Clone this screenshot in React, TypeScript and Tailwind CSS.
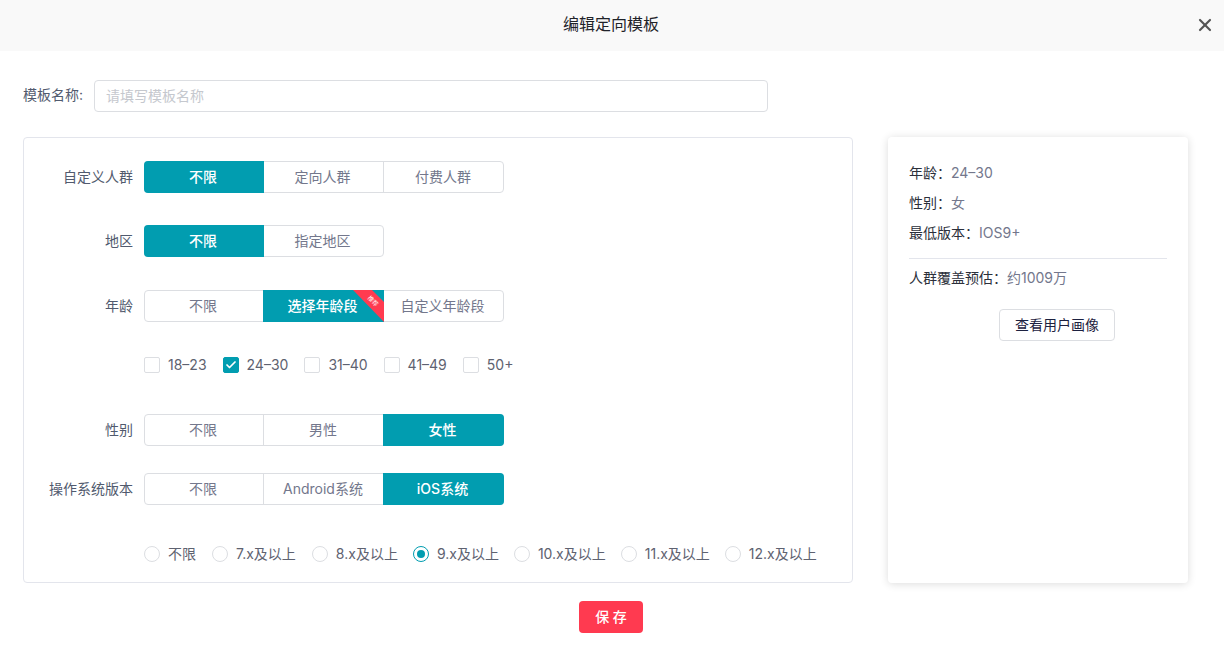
import { X, Check } from "lucide-react"

const font = "font-['Inter','Noto_Sans_CJK_SC',sans-serif]"

type SegItem = { text: string; ribbon?: boolean }

function Segments({ items, active }: { items: SegItem[]; active: number }) {
  return (
    <div className="flex h-8 rounded-[4px] border border-[#dcdee2] w-fit">
      {items.map((item, i) => {
        const on = i === active
        return (
          <div
            key={item.text}
            className={
              "relative flex items-center justify-center h-[32px] mt-[-1px] pr-[2px] text-sm " +
              (i === 0 ? "w-[120px] ml-[-1px] rounded-l-[4px] " : "w-[121px] ml-[-1px] ") +
              (i > 0 && !on && i - 1 !== active ? "border-l border-[#dcdee2] " : "") +
              (on ? "bg-[#019db0] text-white font-medium " : "text-[#73778c] ") +
              (i === items.length - 1 ? "mr-[-1px] rounded-r-[4px] " : "")
            }
          >
            {item.text}
            {item.ribbon && (
              <>
                <svg className="absolute right-0 top-0" width="32" height="32" viewBox="0 0 32 32">
                  <polygon points="1,0 20,0 32,12 32,32" fill="#ff3b50" />
                </svg>
                <span className="absolute right-[5px] top-[7px] rotate-45 text-[6px] leading-[8px] font-normal text-white">推荐</span>
              </>
            )}
          </div>
        )
      })}
    </div>
  )
}

function FormRow({ label, className, children }: { label: string; className?: string; children: React.ReactNode }) {
  return (
    <div className={"flex items-center h-8 " + (className ?? "")}>
      <div className="w-[109px] text-right text-sm text-[#515a6e] mr-[11px]">{label}</div>
      {children}
    </div>
  )
}

function CheckItem({ label, checked }: { label: string; checked?: boolean }) {
  return (
    <div className="flex items-center gap-2 mr-[16px]">
      <span
        className={
          "flex items-center justify-center w-4 h-4 rounded-[2px] border " +
          (checked ? "bg-[#019db0] border-[#019db0]" : "bg-white border-[#dcdee2]")
        }
      >
        {checked && <Check className="w-3 h-3 text-white" strokeWidth={3.5} />}
      </span>
      <span className="text-sm text-[#5e6270]">{label}</span>
    </div>
  )
}

function RadioItem({ label, checked, tight }: { label: string; checked?: boolean; tight?: boolean }) {
  return (
    <div className={"flex items-center gap-2 " + (tight ? "mr-[15px]" : "mr-[16px]")}>
      <span
        className={
          "flex items-center justify-center w-4 h-4 rounded-full border " +
          (checked ? "border-[#019db0]" : "border-[#dcdee2]")
        }
      >
        {checked && <span className="w-2 h-2 rounded-full bg-[#019db0]" />}
      </span>
      <span className="text-sm text-[#5e6270]">{label}</span>
    </div>
  )
}

function Info({ label, value, className }: { label: string; value: string; className?: string }) {
  return (
    <div className={"text-sm leading-5 " + (className ?? "")}>
      <span className="text-[#2b2f3a]">{label}：</span>
      <span className="text-[#73778c]">{value}</span>
    </div>
  )
}

export default function App() {
  return (
    <div className={"w-[1224px] h-[648px] overflow-hidden bg-white " + font}>
      <div className="relative flex items-center justify-center h-[51px] pb-[3px] pr-[2px] bg-[#f9f9f9]">
        <span className="text-base text-[#1f2329]">编辑定向模板</span>
        <X className="absolute right-[9px] top-[15px] w-5 h-5 text-[#555]" strokeWidth={2.6} />
      </div>

      <div className="flex items-center h-8 mt-[29px] ml-[23px]">
        <span className="w-[71px] pb-[3px] text-sm text-[#515a6e]">模板名称:</span>
        <input
          className="w-[674px] h-8 pl-[11px] pr-3 pb-[2px] rounded-[4px] border border-[#dcdee2] text-sm outline-none placeholder:text-[#c5c8ce]"
          placeholder="请填写模板名称"
        />
      </div>

      <div className="flex mt-[25px] ml-[23px]">
        <div className="w-[830px] h-[446px] rounded-[4px] border border-[#e3e5ec] pt-[23px]">
          <FormRow label="自定义人群">
            <Segments items={[{ text: "不限" }, { text: "定向人群" }, { text: "付费人群" }]} active={0} />
          </FormRow>
          <FormRow label="地区" className="mt-8">
            <Segments items={[{ text: "不限" }, { text: "指定地区" }]} active={0} />
          </FormRow>
          <FormRow label="年龄" className="mt-[33px]">
            <Segments
              items={[{ text: "不限" }, { text: "选择年龄段", ribbon: true }, { text: "自定义年龄段" }]}
              active={1}
            />
          </FormRow>
          <div className="flex items-center h-5 mt-[33px] ml-[120px]">
            <CheckItem label="18–23" />
            <CheckItem label="24–30" checked />
            <CheckItem label="31–40" />
            <CheckItem label="41–49" />
            <CheckItem label="50+" />
          </div>
          <FormRow label="性别" className="mt-[39px]">
            <Segments items={[{ text: "不限" }, { text: "男性" }, { text: "女性" }]} active={2} />
          </FormRow>
          <FormRow label="操作系统版本" className="mt-[27px]">
            <Segments items={[{ text: "不限" }, { text: "Android系统" }, { text: "iOS系统" }]} active={2} />
          </FormRow>
          <div className="flex items-center h-5 mt-[39px] ml-[120px]">
            <RadioItem label="不限" />
            <RadioItem label="7.x及以上" />
            <RadioItem label="8.x及以上" tight />
            <RadioItem label="9.x及以上" checked tight />
            <RadioItem label="10.x及以上" tight />
            <RadioItem label="11.x及以上" tight />
            <RadioItem label="12.x及以上" />
          </div>
        </div>

        <div className="w-[300px] h-[446px] ml-[35px] rounded-[4px] bg-white shadow-[0_1px_8px_rgba(0,0,0,0.14)] pt-[26px] px-[21px]">
          <Info label="年龄" value="24–30" />
          <Info label="性别" value="女" className="mt-[10px]" />
          <Info label="最低版本" value="IOS9+" className="mt-[10px]" />
          <div className="h-px bg-[#e3e5ec] mt-[15px]" />
          <Info label="人群覆盖预估" value="约1009万" className="mt-[9px]" />
          <div className="flex mt-[21px] ml-[90px]">
            <button className="w-[116px] h-8 rounded-[4px] border border-[#dcdee2] text-sm text-[#1c2140]">查看用户画像</button>
          </div>
        </div>
      </div>

      <div className="flex justify-center mt-[18px] pr-[2px]">
        <button className="w-16 h-8 rounded-[4px] bg-[#ff3a50] text-sm font-medium text-white">保 存</button>
      </div>
    </div>
  )
}
